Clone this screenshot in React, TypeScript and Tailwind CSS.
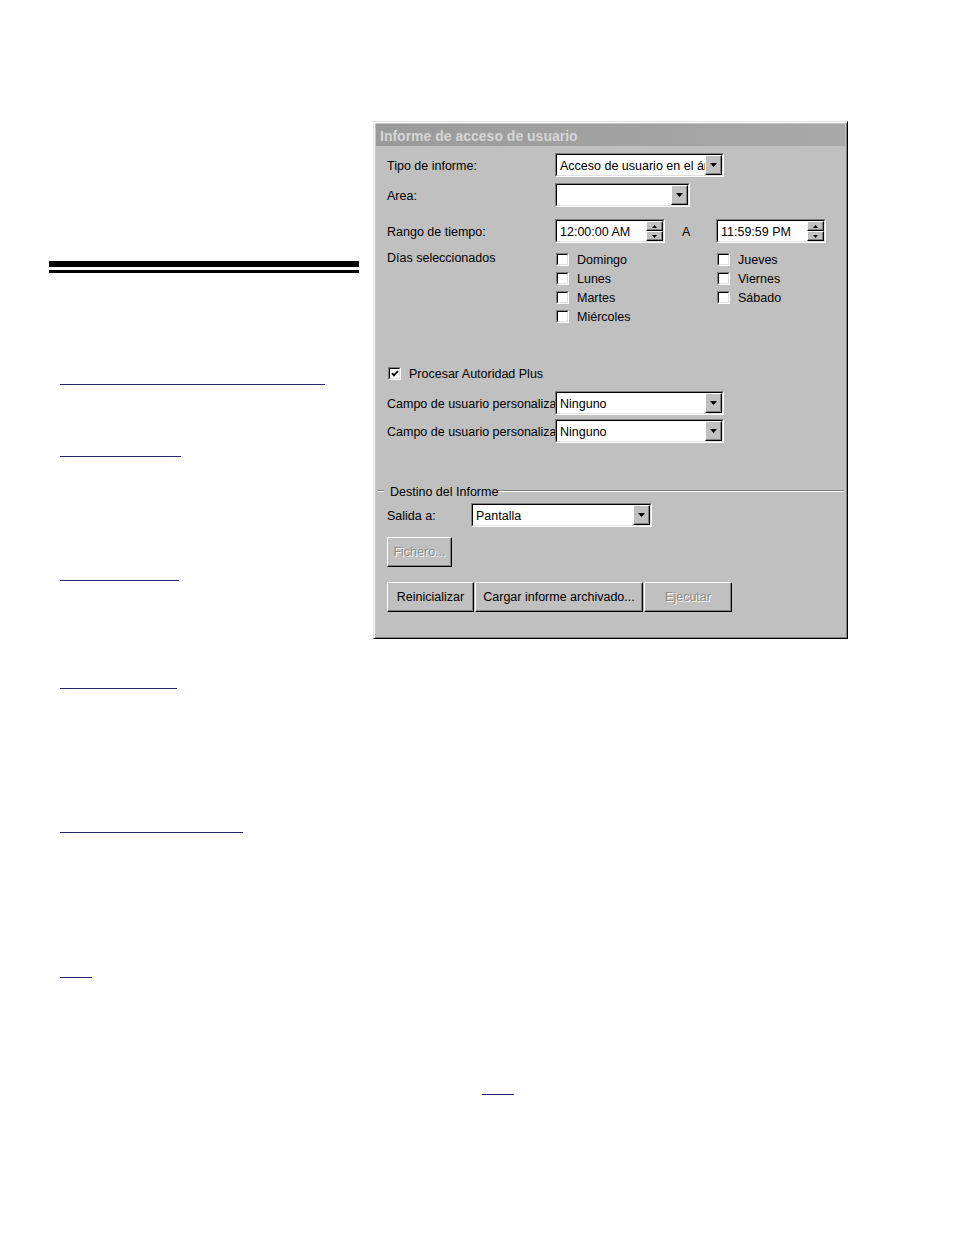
import clsx from "clsx";

const sunkenOuter =
  "border border-t-[#808080] border-l-[#808080] border-r-white border-b-white";
const sunkenInner =
  "border border-t-black border-l-black border-r-[#dfdfdf] border-b-[#dfdfdf] bg-white";
const raised =
  "border border-t-white border-l-white border-r-black border-b-black bg-[#c0c0c0] shadow-[inset_-1px_-1px_0_#808080]";

function DownArrow() {
  return (
    <svg width="7" height="4" viewBox="0 0 7 4">
      <polygon points="0,0 7,0 3.5,4" fill="#000" />
    </svg>
  );
}

function Combo({ value, className }: { value: string; className: string }) {
  return (
    <div className={clsx(sunkenOuter, "h-[24px] shrink-0", className)}>
      <div className={clsx(sunkenInner, "flex h-full")}>
        <span className="h-full flex-1 overflow-hidden whitespace-nowrap pl-[3px] pt-[2px] leading-[18px]">
          {value}
        </span>
        <div className={clsx(raised, "flex w-[17px] items-center justify-center")}>
          <DownArrow />
        </div>
      </div>
    </div>
  );
}

function TimeBox({ value }: { value: string }) {
  return (
    <div className={clsx(sunkenOuter, "h-[24px] w-[110px] shrink-0")}>
      <div className={clsx(sunkenInner, "flex h-full")}>
        <span className="flex-1 whitespace-nowrap pl-[3px] pt-[2px] leading-[18px]">{value}</span>
        <div className="flex w-[17px] flex-col">
          <div className={clsx(raised, "flex flex-1 items-center justify-center")}>
            <svg width="5" height="3" viewBox="0 0 5 3">
              <polygon points="0,3 5,3 2.5,0" fill="#000" />
            </svg>
          </div>
          <div className={clsx(raised, "flex flex-1 items-center justify-center")}>
            <svg width="5" height="3" viewBox="0 0 5 3">
              <polygon points="0,0 5,0 2.5,3" fill="#000" />
            </svg>
          </div>
        </div>
      </div>
    </div>
  );
}

function Checkbox({ label, checked = false }: { label: string; checked?: boolean }) {
  return (
    <div className="flex h-[19px] items-center gap-[8px]">
      <div className={clsx(sunkenOuter, "h-[13px] w-[13px] shrink-0")}>
        <div className={clsx(sunkenInner, "flex h-full items-center justify-center")}>
          {checked && (
            <svg width="8" height="7" viewBox="0 0 8 7">
              <path d="M1 3.2 L3 5.4 L7 1" stroke="#000" strokeWidth="1.8" fill="none" />
            </svg>
          )}
        </div>
      </div>
      <span className="whitespace-nowrap pt-[1px]">{label}</span>
    </div>
  );
}

function Button({
  label,
  disabled = false,
  className,
}: {
  label: string;
  disabled?: boolean;
  className: string;
}) {
  return (
    <div
      className={clsx(
        raised,
        "flex h-[30px] shrink-0 items-center justify-center whitespace-nowrap pt-[1px]",
        disabled && "text-[#8a8a8a] [text-shadow:1px_1px_0_#fff]",
        className
      )}
    >
      {label}
    </div>
  );
}

function EtchedLine({ className }: { className: string }) {
  return <div className={clsx("border-t border-b border-t-[#808080] border-b-white", className)} />;
}

function ReportDialog() {
  return (
    <div className="h-[518px] w-[475px] border border-t-[#dfdfdf] border-l-[#dfdfdf] border-r-black border-b-black bg-[#c0c0c0] p-[2px] text-[12.5px] text-black shadow-[inset_1px_1px_0_#fff,inset_-1px_-1px_0_#808080]">
      {/* Title bar (inactive) */}
      <div className="flex h-[22px] items-center bg-gradient-to-r from-[#9a9a9a] to-[#a9a9a9] pl-[4px] pt-[2px] text-[14px] font-bold text-[#d6d6d6]">
        Informe de acceso de usuario
      </div>

      <div className="px-[11px]">
        <div className="mt-[7px] flex items-center">
          <span className="w-[168px] shrink-0 pt-[3px]">Tipo de informe:</span>
          <Combo value="Acceso de usuario en el área" className="w-[169px]" />
        </div>

        <div className="mt-[6px] flex items-center">
          <span className="w-[168px] shrink-0 pt-[3px]">Area:</span>
          <Combo value="" className="w-[135px]" />
        </div>

        <div className="mt-[12px] flex items-center">
          <span className="w-[168px] shrink-0 pt-[3px]">Rango de tiempo:</span>
          <TimeBox value="12:00:00 AM" />
          <span className="w-[51px] shrink-0 pl-[17px] pt-[3px]">A</span>
          <TimeBox value="11:59:59 PM" />
        </div>

        <div className="mt-[7px] flex">
          <span className="h-[19px] w-[168px] shrink-0 leading-[17px]">Días seleccionados</span>
          <div className="w-[161px] shrink-0 pl-[1px]">
            <Checkbox label="Domingo" />
            <Checkbox label="Lunes" />
            <Checkbox label="Martes" />
            <Checkbox label="Miércoles" />
          </div>
          <div className="pl-[1px]">
            <Checkbox label="Jueves" />
            <Checkbox label="Viernes" />
            <Checkbox label="Sábado" />
          </div>
        </div>

        <div className="mt-[38px] pl-[1px]">
          <Checkbox label="Procesar Autoridad Plus" checked />
        </div>

        <div className="mt-[8px] flex items-center">
          <span className="w-[168px] shrink-0 overflow-hidden whitespace-nowrap pt-[3px]">
            Campo de usuario personalizado 1:
          </span>
          <Combo value="Ninguno" className="w-[169px]" />
        </div>

        <div className="mt-[4px] flex items-center">
          <span className="w-[168px] shrink-0 overflow-hidden whitespace-nowrap pt-[3px]">
            Campo de usuario personalizado 2:
          </span>
          <Combo value="Ninguno" className="w-[169px]" />
        </div>

        {/* Group header */}
        <div className="-mx-[10px] mt-[41px] flex h-[14px] items-center">
          <EtchedLine className="w-[7px]" />
          <span className="whitespace-nowrap pl-[6px] pt-[3px]">Destino del Informe</span>
          <EtchedLine className="flex-1" />
        </div>

        <div className="mt-[5px] flex items-center">
          <span className="w-[84px] shrink-0 pt-[3px]">Salida a:</span>
          <Combo value="Pantalla" className="w-[181px]" />
        </div>

        <div className="mt-[10px] flex">
          <Button label="Fichero..." disabled className="w-[65px]" />
        </div>

        <div className="mt-[15px] flex gap-[1px]">
          <Button label="Reinicializar" className="w-[87px]" />
          <Button label="Cargar informe archivado..." className="w-[168px]" />
          <Button label="Ejecutar" disabled className="w-[88px]" />
        </div>
      </div>
    </div>
  );
}

export default function App() {
  return (
    <div className="h-[1235px] w-[954px] overflow-hidden bg-white font-['Liberation_Sans',Arial,sans-serif]">
      <div className="flex">
        {/* Left margin column: rules and link underlines */}
        <div className="w-[373px] shrink-0 pl-[49px] pt-[261px]">
          <div className="h-[6px] w-[310px] bg-black" />
          <div className="mt-[3px] h-[3px] w-[310px] bg-black" />

          <div className="ml-[11px]">
            <div className="mt-[111px] h-px w-[265px] bg-[#23246e]" />
            <div className="mt-[71px] h-px w-[121px] bg-[#23246e]" />
            <div className="mt-[123px] h-px w-[119px] bg-[#23246e]" />
            <div className="mt-[107px] h-px w-[117px] bg-[#23246e]" />
            <div className="mt-[143px] h-px w-[183px] bg-[#23246e]" />
            <div className="mt-[144px] h-px w-[32px] bg-[#23246e]" />
          </div>
        </div>

        <div className="pt-[121px]">
          <ReportDialog />
        </div>
      </div>

      <div className="mt-[116px] pl-[482px]">
        <div className="h-px w-[32px] bg-[#23246e]" />
      </div>
    </div>
  );
}
